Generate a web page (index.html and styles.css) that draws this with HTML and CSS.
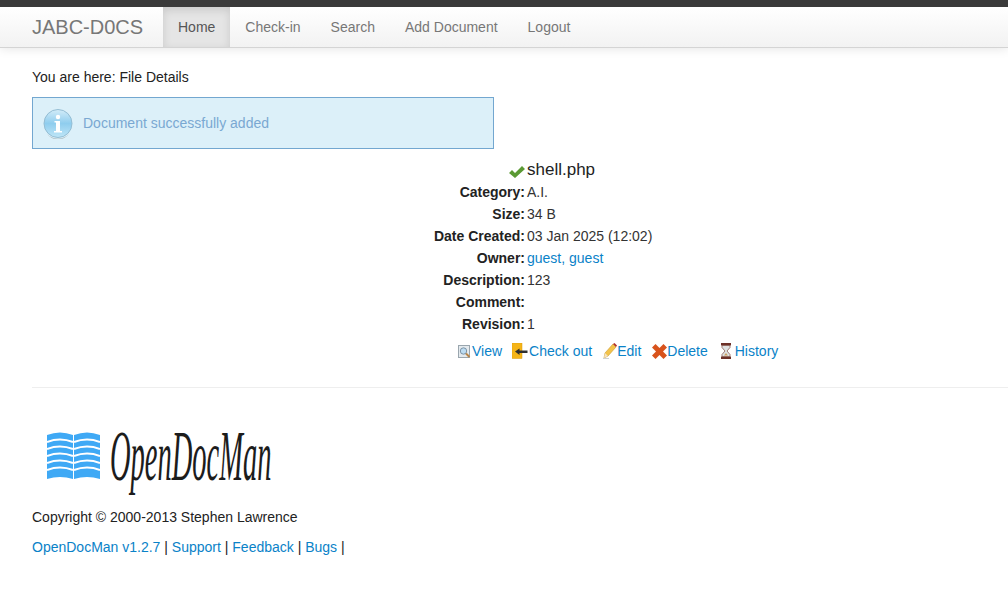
FILE: index.html
```html
<!DOCTYPE html>
<html lang="en">
<head>
<meta charset="utf-8">
<title>JABC-D0CS</title>
<link rel="stylesheet" href="styles.css">
</head>
<body>
<header class="navbar">
  <a class="brand" href="#">JABC-D0CS</a>
  <nav class="nav">
    <a class="nav-item active" href="#">Home</a>
    <a class="nav-item" href="#">Check-in</a>
    <a class="nav-item" href="#">Search</a>
    <a class="nav-item" href="#">Add Document</a>
    <a class="nav-item" href="#">Logout</a>
  </nav>
</header>
<main class="content">
  <p class="crumb">You are here: File Details</p>
  <div class="alert">
    <svg class="alert-icon" width="30" height="30" viewBox="0 0 30 30">
      <defs>
        <linearGradient id="infoGrad" x1="0" y1="0" x2="0" y2="1">
          <stop offset="0" stop-color="#d3ecf8"/>
          <stop offset="0.5" stop-color="#8fcdee"/>
          <stop offset="1" stop-color="#bfe6f7"/>
        </linearGradient>
      </defs>
      <circle cx="15" cy="14.500" r="14" fill="url(#infoGrad)" stroke="#94bdd3" stroke-width="1"/>
      <path d="M4 25a14 14 0 0 0 22 0a15 15 0 0 1-22 0z" fill="#9aa9ad"/>
      <circle cx="15" cy="8" r="2.200" fill="#fff"/>
      <path d="M11.500 12h5.500v10h2v1.500h-8v-1.500h2v-8.500h-1.500z" fill="#fff"/>
    </svg>
    <span>Document successfully added</span>
  </div>
  <section class="details">
    <div class="label file-icon">
      <svg width="16" height="12" viewBox="0 0 16 12"><path d="M0 7l3-3 3 3 7-7 3 3-10 9z" fill="#5b9a34"/></svg>
    </div>
    <div class="value file-name">shell.php</div>
    <div class="label">Category:</div><div class="value">A.I.</div>
    <div class="label">Size:</div><div class="value">34 B</div>
    <div class="label">Date Created:</div><div class="value">03 Jan 2025 (12:02)</div>
    <div class="label">Owner:</div><div class="value"><a href="#">guest, guest</a></div>
    <div class="label">Description:</div><div class="value">123</div>
    <div class="label">Comment:</div><div class="value"></div>
    <div class="label">Revision:</div><div class="value">1</div>
  </section>
  <div class="actions">
    <a class="action action-view" href="#">
      <svg width="14" height="14" viewBox="0 0 14 14"><rect x="1.500" y="1.500" width="11" height="12" fill="#e4eaee" stroke="#9aa6ae"/><circle cx="6.500" cy="7" r="3.200" fill="#bcdcf2" stroke="#7d93a5"/><path d="M9 9.500l3.500 3.500" stroke="#b8864a" stroke-width="2"/></svg>
      <span>View</span>
    </a>
    <a class="action" href="#">
      <svg width="16" height="16" viewBox="0 0 16 16"><rect x="0" y="0" width="10" height="15.500" fill="#f5b417" stroke="#d99a0d" stroke-width=".5"/><path d="M3 8.500l4.500-3v2h8v2.500h-8v2z" fill="#2e2e2e"/></svg>
      <span>Check out</span>
    </a>
    <a class="action action-tight" href="#">
      <svg width="14" height="16" viewBox="0 0 14 16"><path d="M1 15l1-5 8-9 3 3-8 9z" fill="#f3c34a" stroke="#c99a32" stroke-width=".6"/><path d="M10 1l3 3 1-1.500-2.500-2.500z" fill="#b3312a"/><path d="M1 15l1-5 3 3z" fill="#f5e3c1"/><path d="M0 15.500h6" stroke="#cfd2d4" stroke-width="1"/></svg>
      <span>Edit</span>
    </a>
    <a class="action action-tight" href="#">
      <svg width="15" height="15" viewBox="0 0 15 15"><path d="M3.500 0l4 4 4-4 3.500 3.500-4 4 4 4-3.500 3.500-4-4-4 4-3.500-3.500 4-4-4-4z" fill="#d8531c"/></svg>
      <span>Delete</span>
    </a>
    <a class="action" href="#">
      <svg width="15" height="16" viewBox="-2 0 15 16"><rect x="0" y="0" width="10" height="2.500" fill="#6d3128"/><rect x="0" y="13.500" width="10" height="2.500" fill="#6d3128"/><path d="M1 2.500h8v2l-3 3.500 3 3.500v2h-8v-2l3-3.500-3-3.500z" fill="#dfe3e3" stroke="#7d4a3f" stroke-width=".7"/><path d="M3 12.500h4l-2-2.500z" fill="#c9a063"/></svg>
      <span>History</span>
    </a>
  </div>
  <hr class="rule">
  <footer class="footer">
    <div class="logo">
      <svg class="logo-book" width="53" height="47" viewBox="0 0 53 47">
        <path d="M0 3q13-5 26 0v44q-13-4-26 0zM27 3q13-5 26 0v44q-13-4-26 0z" fill="#3fa9f5"/>
        <path d="M0 10q13-5 26 0M0 17q13-5 26 0M0 24q13-5 26 0M0 31q13-5 26 0M0 38q13-5 26 0M27 10q13-5 26 0M27 17q13-5 26 0M27 24q13-5 26 0M27 31q13-5 26 0M27 38q13-5 26 0" fill="none" stroke="#fff" stroke-width="2"/>
      </svg>
      <span class="logo-text">OpenDocMan</span>
    </div>
    <p class="copy">Copyright © 2000-2013 Stephen Lawrence</p>
    <p class="links"><a href="#">OpenDocMan v1.2.7</a> | <a href="#">Support</a> | <a href="#">Feedback</a> | <a href="#">Bugs</a> |</p>
  </footer>
</main>
</body>
</html>
```
FILE: styles.css
```css
* { box-sizing: border-box; }
html, body { margin: 0; padding: 0; }
body {
  background: #fff;
  color: #222;
  font-family: "Liberation Sans", Arial, sans-serif;
  font-size: 14px;
  line-height: 20px;
  border-top: 7px solid #3a3a3a;
  height: 608px;
  overflow: hidden;
}
a { color: #0a82c8; text-decoration: none; }
p { margin: 0; }

.navbar {
  display: flex;
  height: 41px;
  padding-left: 32px;
  background: linear-gradient(#ffffff, #f2f2f2);
  border-bottom: 1px solid #d4d4d4;
  box-shadow: 0 1px 10px rgba(0, 0, 0, 0.1);
}
.brand {
  width: 131px;
  color: #777;
  font-size: 20px;
  line-height: 40px;
}
.nav { display: flex; }
.nav-item {
  padding: 0 15px;
  color: #777;
  line-height: 40px;
}
.nav-item.active {
  color: #555;
  background: #e5e5e5;
  box-shadow: inset 0 3px 8px rgba(0, 0, 0, 0.125);
}

.content { padding: 19px 0 0 32px; }
.crumb { line-height: 20px; color: #222; }

.alert {
  display: flex;
  align-items: center;
  width: 462px;
  height: 52px;
  margin-top: 10px;
  padding-left: 10px;
  background: #dcf0f9;
  border: 1px solid #73a7d0;
  color: #7aa8d2;
}
.alert-icon { margin: 2px 10px 0 0; flex: none; }

.details {
  display: grid;
  grid-template-columns: 95px auto;
  justify-content: start;
  column-gap: 2px;
  grid-auto-rows: 22px;
  margin: 10px 0 0 398px;
  line-height: 22px;
}
.label { font-weight: 700; text-align: right; white-space: nowrap; }
.value { color: #333; }
.file-icon { display: flex; justify-content: flex-end; align-items: center; padding-top: 3px; }
.file-name { font-size: 17px; color: #222; }

.actions {
  display: flex;
  gap: 11px;
  height: 20px;
  margin: 6px 0 0 425px;
}
.action { display: flex; align-items: center; gap: 1px; white-space: nowrap; }
.action-view { margin-right: -1px; }
.action-tight { gap: 0; }

.rule {
  margin: 26px 0 0;
  border: 0;
  border-top: 1px solid #eee;
}

.logo {
  display: flex;
  align-items: flex-start;
  height: 64px;
  margin-top: 44px;
  padding-left: 15px;
}
.logo-book { margin-right: 10px; flex: none; }
.logo-text {
  margin-top: -12px;
  font-family: "Liberation Serif", serif;
  font-style: italic;
  font-size: 28.500px;
  line-height: 30px;
  color: #1c1c1c;
  transform: scaleY(2.500);
  transform-origin: left top;
}

.copy { margin-top: 11px; }
.links { margin-top: 10px; }
```
